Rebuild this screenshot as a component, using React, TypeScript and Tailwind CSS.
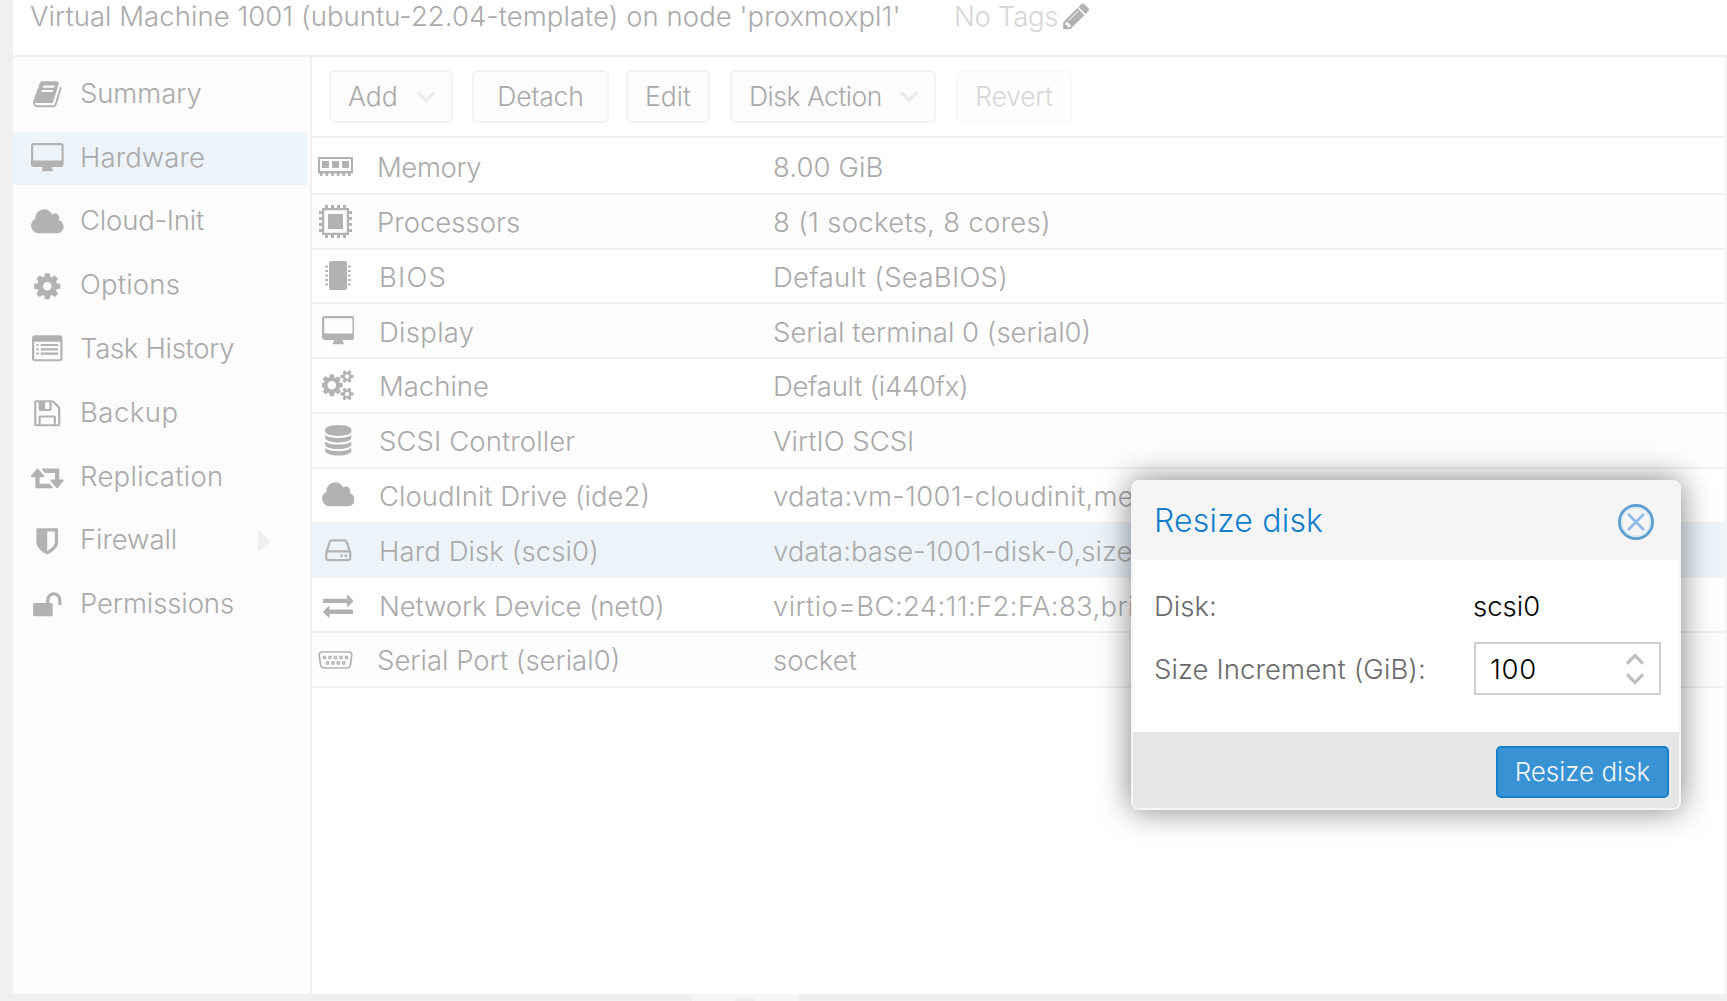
import type { ReactNode } from "react";

type IconProps = { className?: string };

function Glyph({ d, width = 1792, x = 0, className = "" }: { d: string; width?: number; x?: number; className?: string }) {
  return (
    <svg
      viewBox={`${x} 0 ${width} 1792`}
      className={`h-[30.5px] shrink-0 ${className}`}
      style={{ width: (width / 1792) * 30.5 }}
      fill="currentColor"
    >
      <path d={d} />
    </svg>
  );
}

const paths = {
  book: "M1703 478q40 57 18 129l-275 906q-19 64-76.5 107.5t-122.5 43.5h-923q-77 0-148.5-53.5t-99.5-131.5q-24-67-2-127 0-4 3-27t4-37q1-8-3-21.5t-3-19.5q2-11 8-21t16.5-23.5 16.5-23.5q23-38 45-91.5t30-91.5q3-10 .5-30t-.5-28q3-11 17-28t17-23q21-36 42-92t25-90q1-9-2.5-32t.5-28q4-13 22-30.5t22-22.5q19-26 42.5-84.5t27.5-96.5q1-8-3-25.5t-2-26.5q2-8 9-18t18-23 17-21q8-12 16.5-30.5t15-35 16-36 19.5-32 26.5-23.5 36-11.5 47.5 5.5l-1 3q38-9 51-9h761q74 0 114 56t18 130l-274 906q-36 119-71.5 153.5t-128.5 34.5h-869q-27 0-38 15-11 16-1 43 24 70 144 70h923q29 0 56-15.5t35-41.5l300-987q7-22 5-57 38 15 59 43zm-1064 2q-4 13 2 22.5t20 9.5h608q13 0 25.5-9.5t16.5-22.5l21-64q4-13-2-22.5t-20-9.5h-608q-13 0-25.5 9.5t-16.5 22.5zm-83 256q-4 13 2 22.5t20 9.5h608q13 0 25.5-9.5t16.5-22.5l21-64q4-13-2-22.5t-20-9.5h-608q-13 0-25.5 9.5t-16.5 22.5z",
  desktop:
    "M1792 992v-832q0-13-9.5-22.5t-22.5-9.5h-1600q-13 0-22.5 9.5t-9.5 22.5v832q0 13 9.5 22.5t22.5 9.5h1600q13 0 22.5-9.5t9.5-22.5zm128-832v1088q0 66-47 113t-113 47h-544q0 37 16 77.5t32 71 16 43.5q0 26-19 45t-45 19h-512q-26 0-45-19t-19-45q0-14 16-44t32-70 16-78h-544q-66 0-113-47t-47-113v-1088q0-66 47-113t113-47h1600q66 0 113 47t47 113z",
  cloud:
    "M1984 1152q0 159-112.5 271.5t-271.5 112.5h-1088q-185 0-316.5-131.5t-131.5-316.5q0-132 71-241.5t187-163.5q-2-28-2-43 0-212 150-362t362-150q158 0 286.5 88t187.5 230q70-62 166-62 106 0 181 75t75 181q0 75-41 138 129 30 213 134.5t84 239.5z",
  cog: "M1152 896q0-106-75-181t-181-75-181 75-75 181 75 181 181 75 181-75 75-181zm512-109v222q0 12-8 23t-20 13l-185 28q-19 54-39 91 35 50 107 138 10 12 10 25t-9 23q-27 37-99 108t-94 71q-12 0-26-9l-138-108q-44 23-91 38-16 136-29 186-7 28-36 28h-222q-14 0-24.5-8.5t-11.5-21.5l-28-184q-49-16-90-37l-141 107q-10 9-25 9-14 0-25-11-126-114-165-168-7-10-7-23 0-12 8-23 15-21 51-66.5t54-70.5q-27-50-41-99l-183-27q-13-2-21-12.5t-8-23.5v-222q0-12 8-23t19-13l186-28q14-46 39-92-40-57-107-138-10-12-10-24 0-10 9-23 26-36 98.5-107.5t94.5-71.5q13 0 26 10l138 107q44-23 91-38 16-136 29-186 7-28 36-28h222q14 0 24.5 8.5t11.5 21.5l28 184q49 16 90 37l142-107q9-9 24-9 13 0 25 10 129 119 165 170 7 8 7 22 0 12-8 23-15 21-51 66.5t-54 70.5q26 50 41 98l183 28q13 2 21 12.5t8 23.5z",
  list: "M160 128h1472q66 0 113 47t47 113v1216q0 66-47 113t-113 47h-1472q-66 0-113-47t-47-113v-1216q0-66 47-113t113-47zM160 512q-32 0-32 32v960q0 32 32 32h1472q32 0 32-32v-960q0-32-32-32zM256 640h128v128h-128zM512 640h1024v128h-1024zM256 896h128v128h-128zM512 896h1024v128h-1024zM256 1152h128v128h-128zM512 1152h1024v128h-1024z",
  floppy:
    "M512 1536h768v-384h-768v384zm896 0h128v-896q0-14-10-38.5t-20-34.5l-281-281q-10-10-34-20t-39-10v416q0 40-28 68t-68 28h-576q-40 0-68-28t-28-68v-416h-128v1280h128v-416q0-40 28-68t68-28h832q40 0 68 28t28 68v416zm-384-928v-320q0-13-9.5-22.5t-22.5-9.5h-192q-13 0-22.5 9.5t-9.5 22.5v320q0 13 9.5 22.5t22.5 9.5h192q13 0 22.5-9.5t9.5-22.5zm640 32v928q0 40-28 68t-68 28h-1344q-40 0-68-28t-28-68v-1344q0-40 28-68t68-28h928q40 0 88 20t76 48l280 280q28 28 48 76t20 88z",
  retweet:
    "M1344 1504q0 13-9.5 22.5t-22.5 9.5h-960q-8 0-13.5-2t-9-7-5.5-8-3-11.5-1-11.5v-600h-192q-26 0-45-19t-19-45q0-24 15-41l320-384q19-22 49-22t49 22l320 384q15 17 15 41 0 26-19 45t-45 19h-192v384h576q16 0 25 11l160 192q7 10 7 21zm640-416q0 24-15 41l-320 384q-20 23-49 23t-49-23l-320-384q-15-17-15-41 0-26 19-45t45-19h192v-384h-576q-16 0-25-12l-160-192q-7-9-7-20 0-13 9.5-22.5t22.5-9.5h960q8 0 13.5 2t9 7 5.5 8 3 11.5 1 11.5v600h192q26 0 45 19t19 45z",
  shield:
    "M1344 960v-640h-448v1137q119-63 213-137 235-184 235-360zm192-768v768q0 86-33.5 170.5t-83 150-118 127.5-126.5 103-121 77.5-89.5 49.5-42.5 20q-12 6-26 6t-26-6q-16-7-42.5-20t-89.5-49.5-121-77.5-126.5-103-118-127.5-83-150-33.5-170.5v-768q0-26 19-45t45-19h1152q26 0 45 19t19 45z",
  unlock:
    "M1728 576v256q0 26-19 45t-45 19h-64q-26 0-45-19t-19-45v-256q0-106-75-181t-181-75-181 75-75 181v192h96q40 0 68 28t28 68v576q0 40-28 68t-68 28h-960q-40 0-68-28t-28-68v-576q0-40 28-68t68-28h672v-192q0-185 131.5-316.5t316.5-131.5 316.5 131.5 131.5 316.5z",
  pencil:
    "M491 1536l91-91-235-235-91 91v107h128v128h107zm523-928q0-22-22-22-10 0-17 7l-542 542q-7 7-7 17 0 22 22 22 10 0 17-7l542-542q7-7 7-17zm-54-192l416 416-832 832h-416v-416zm683 96q0 53-37 90l-166 166-416-416 166-165q36-38 90-38 53 0 91 38l235 234q37 39 37 91z",
  cogs: "M832 896q0-106-75-181t-181-75-181 75-75 181 75 181 181 75 181-75 75-181zm768 512q0-52-38-90t-90-38-90 38-38 90q0 53 37.5 90.5t90.5 37.5 90.5-37.5 37.5-90.5zm0-1024q0-52-38-90t-90-38-90 38-38 90q0 53 37.5 90.5t90.5 37.5 90.5-37.5 37.5-90.5zm-384 421v185q0 10-7 19.5t-16 10.5l-155 24q-11 35-32 76 34 48 90 115 7 11 7 20 0 12-7 19-23 30-82.5 89.5t-78.5 59.5q-11 0-21-7l-115-90q-37 19-77 31-11 108-23 155-7 24-30 24h-186q-11 0-20-7.5t-10-17.5l-23-153q-34-10-75-31l-118 89q-7 7-20 7-11 0-21-8-144-133-144-160 0-9 7-19 10-14 41-53t47-61q-23-44-35-82l-152-24q-10-1-17-9.5t-7-19.5v-185q0-10 7-19.5t16-10.5l155-24q11-35 32-76-34-48-90-115-7-11-7-20 0-12 7-20 22-30 82-89t79-59q11 0 21 7l115 90q34-18 77-32 11-108 23-154 7-24 30-24h186q11 0 20 7.5t10 17.5l23 153q34 10 75 31l118-89q8-7 20-7 11 0 21 8 144 133 144 160 0 8-7 19-12 16-42 54t-45 60q23 48 34 82l152 23q10 2 17 10.5t7 19.5zm640 533v140q0 16-149 31-12 27-30 52 51 113 51 138 0 4-4 7-122 71-124 71-8 0-46-47t-52-68q-20 2-30 2t-30-2q-14 21-52 68t-46 47q-2 0-124-71-4-3-4-7 0-25 51-138-18-25-30-52-149-15-149-31v-140q0-16 149-31 13-29 30-52-51-113-51-138 0-4 4-7 4-2 35-20t59-34 30-16q8 0 46 46.5t52 67.5q20-2 30-2t30 2q51-71 92-112l6-2q4 0 124 70 4 3 4 7 0 25-51 138 17 23 30 52 149 15 149 31zm0-1024v140q0 16-149 31-12 27-30 52 51 113 51 138 0 4-4 7-122 71-124 71-8 0-46-47t-52-68q-20 2-30 2t-30-2q-14 21-52 68t-46 47q-2 0-124-71-4-3-4-7 0-25 51-138-18-25-30-52-149-15-149-31v-140q0-16 149-31 13-29 30-52-51-113-51-138 0-4 4-7 4-2 35-20t59-34 30-16q8 0 46 46.5t52 67.5q20-2 30-2t30 2q51-71 92-112l6-2q4 0 124 70 4 3 4 7 0 25-51 138 17 23 30 52 149 15 149 31z",
  database:
    "M896 768q237 0 443-43t325-127v170q0 69-103 128t-280 93.5-385 34.5-385-34.5-280-93.5-103-128v-170q119 84 325 127t443 43zm0 768q237 0 443-43t325-127v170q0 69-103 128t-280 93.5-385 34.5-385-34.5-280-93.5-103-128v-170q119 84 325 127t443 43zm0-384q237 0 443-43t325-127v170q0 69-103 128t-280 93.5-385 34.5-385-34.5-280-93.5-103-128v-170q119 84 325 127t443 43zm0-1152q208 0 385 34.5t280 93.5 103 128v128q0 69-103 128t-280 93.5-385 34.5-385-34.5-280-93.5-103-128v-128q0-69 103-128t280-93.5 385-34.5z",
  hdd: "M1168 1216q0 33-23.5 56.5t-56.5 23.5-56.5-23.5-23.5-56.5 23.5-56.5 56.5-23.5 56.5 23.5 23.5 56.5zm256 0q0 33-23.5 56.5t-56.5 23.5-56.5-23.5-23.5-56.5 23.5-56.5 56.5-23.5 56.5 23.5 23.5 56.5zm112 160v-320q0-13-9.5-22.5t-22.5-9.5h-1216q-13 0-22.5 9.5t-9.5 22.5v320q0 13 9.5 22.5t22.5 9.5h1216q13 0 22.5-9.5t9.5-22.5zm-1230-480h1180l-157-482q-4-13-16-21.5t-26-8.5h-782q-14 0-26 8.5t-16 21.5zm1358 160v320q0 66-47 113t-113 47h-1216q-66 0-113-47t-47-113v-320q0-25 16-75l197-606q17-53 63-86t101-33h782q55 0 101 33t63 86l197 606q16 50 16 75z",
  exchange:
    "M1792 1184v192q0 13-9.5 22.5t-22.5 9.5h-1376v192q0 13-9.5 22.5t-22.5 9.5q-12 0-24-10l-319-320q-9-9-9-22 0-14 9-23l320-320q9-9 23-9 13 0 22.5 9.5t9.5 22.5v192h1376q13 0 22.5 9.5t9.5 22.5zm0-544q0 14-9 23l-320 320q-9 9-23 9-13 0-22.5-9.5t-9.5-22.5v-192h-1376q-13 0-22.5-9.5t-9.5-22.5v-192q0-13 9.5-22.5t22.5-9.5h1376v-192q0-14 9-23t23-9q12 0 24 10l319 319q9 9 9 23z",
};

function ListIcon() {
  return (
    <svg viewBox="0 0 1792 1792" className="mb-[3px] h-[30.5px] w-[30.5px] shrink-0" fill="currentColor">
      <path d={paths.list} fillRule="evenodd" />
    </svg>
  );
}

function MemoryIcon({ className = "" }: IconProps) {
  return (
    <svg viewBox="0 0 35 19" className={`h-[19px] w-[35px] shrink-0 ${className}`} fill="currentColor">
      <path d="M0 0h35v16.500h-35zM2 2v12h31v-12z" fillRule="evenodd" />
      <path d="M4 4h7v7h-7zM14 4h7v7h-7zM24 4h7v7h-7z" />
      <path d="M2 16h2.600v3h-2.600zM7.600 16h2.600v3h-2.600zM13.200 16h2.600v3h-2.600zM18.800 16h2.600v3h-2.600zM24.400 16h2.600v3h-2.600zM30 16h2.600v3h-2.600z" />
    </svg>
  );
}

function CpuIcon({ className = "" }: IconProps) {
  const pins = [6, 12, 18, 24];
  return (
    <svg viewBox="0 0 33 33" className={`h-[33px] w-[33px] shrink-0 ${className}`} fill="currentColor">
      <path d="M3 3h27v27h-27zM5.200 5.200v22.600h22.600v-22.600z" fillRule="evenodd" />
      <path d="M9 9h15v15h-15z" />
      {pins.map((p) => (
        <path key={p} d={`M${p} 0h3v4h-3zM${p} 29h3v4h-3zM0 ${p}h4v3h-4zM29 ${p}h4v3h-4z`} />
      ))}
    </svg>
  );
}

function ChipIcon({ className = "" }: IconProps) {
  const rows = [4.5, 9, 13.500, 18, 22.500];
  return (
    <svg viewBox="0 0 26 29" className={`h-[29px] w-[26px] shrink-0 ${className}`} fill="currentColor">
      <rect x="4" y="0" width="18" height="29" rx="2" />
      {rows.map((y) => (
        <path key={y} d={`M1 ${y}h2v2h-2a1 1 0 0 1 0-2zM23 ${y}h2a1 1 0 0 1 0 2h-2z`} />
      ))}
    </svg>
  );
}

function SerialIcon({ className = "" }: IconProps) {
  return (
    <svg viewBox="0 0 35 18" className={`h-[18px] w-[35px] shrink-0 ${className}`} fill="none" stroke="currentColor">
      <path
        d="M4.500 1h26q3.500 0 3.300 3.300l-1.300 9q-.700 3.700-4 3.700h-22q-3.300 0-4-3.700l-1.300-9q-.200-3.300 3.300-3.300z"
        strokeWidth="1.700"
      />
      {[6.500, 12, 17.500, 23, 28.500].map((x) => (
        <circle key={x} cx={x} cy="6.500" r="1.200" strokeWidth="1.400" />
      ))}
      {[9.500, 15, 20.300, 25.700].map((x) => (
        <circle key={x} cx={x} cy="12" r="1.200" strokeWidth="1.400" />
      ))}
    </svg>
  );
}

function Chevron({ up = false, className = "" }: { up?: boolean; className?: string }) {
  return (
    <svg viewBox="0 0 18 12" className={`h-3 w-[18px] shrink-0 ${className}`} fill="none" stroke="currentColor" strokeWidth="3.200">
      <path d={up ? "M1 10.500l8-8 8 8" : "M1 1.500l8 8 8-8"} />
    </svg>
  );
}

const nav: { label: string; icon: ReactNode; tracking: string; active?: boolean; sub?: boolean }[] = [
  { label: "Summary", icon: <Glyph d={paths.book} />, tracking: "tracking-[-0.1px]" },
  { label: "Hardware", icon: <Glyph d={paths.desktop} width={1920} />, tracking: "tracking-[0.1px]", active: true },
  { label: "Cloud-Init", icon: <Glyph d={paths.cloud} width={1920} x={64} />, tracking: "tracking-[-0.2px]" },
  { label: "Options", icon: <Glyph d={paths.cog} />, tracking: "tracking-[0.2px]" },
  { label: "Task History", icon: <ListIcon />, tracking: "tracking-[-0.3px]" },
  { label: "Backup", icon: <Glyph d={paths.floppy} />, tracking: "tracking-[0.5px]" },
  { label: "Replication", icon: <Glyph d={paths.retweet} width={1920} x={64} />, tracking: "tracking-[0.3px]" },
  { label: "Firewall", icon: <Glyph d={paths.shield} />, tracking: "tracking-[-0.1px]", sub: true },
  { label: "Permissions", icon: <Glyph d={paths.unlock} />, tracking: "tracking-[-0.1px]" },
];

type Device = {
  label: string;
  value: string;
  icon: ReactNode;
  wide?: boolean;
  selected?: boolean;
  labelTracking?: string;
  valueTracking?: string;
};

const hardware: Device[] = [
  { label: "Memory", value: "8.00 GiB", icon: <MemoryIcon />, wide: true, labelTracking: "tracking-[-0.4px]", valueTracking: "tracking-[0.1px]" },
  { label: "Processors", value: "8 (1 sockets, 8 cores)", icon: <CpuIcon />, wide: true, valueTracking: "tracking-[0.3px]" },
  { label: "BIOS", value: "Default (SeaBIOS)", icon: <ChipIcon />, labelTracking: "tracking-[1.2px]", valueTracking: "tracking-[0.3px]" },
  {
    label: "Display",
    value: "Serial terminal 0 (serial0)",
    icon: <Glyph d={paths.desktop} width={1920} />,
    labelTracking: "tracking-[0.3px]",
  },
  { label: "Machine", value: "Default (i440fx)", icon: <Glyph d={paths.cogs} width={1920} />, valueTracking: "tracking-[-0.3px]" },
  { label: "SCSI Controller", value: "VirtIO SCSI", icon: <Glyph d={paths.database} />, labelTracking: "tracking-[0.1px]" },
  {
    label: "CloudInit Drive (ide2)",
    value: "vdata:vm-1001-cloudinit,me",
    icon: <Glyph d={paths.cloud} width={1920} x={64} />,
    valueTracking: "tracking-[0.3px]",
  },
  {
    label: "Hard Disk (scsi0)",
    value: "vdata:base-1001-disk-0,size",
    icon: <Glyph d={paths.hdd} />,
    selected: true,
    labelTracking: "tracking-[0.1px]",
    valueTracking: "tracking-[0.05px]",
  },
  {
    label: "Network Device (net0)",
    value: "virtio=BC:24:11:F2:FA:83,bri",
    icon: <Glyph d={paths.exchange} />,
    labelTracking: "tracking-[-0.15px]",
    valueTracking: "tracking-[0.35px]",
  },
  { label: "Serial Port (serial0)", value: "socket", icon: <SerialIcon />, wide: true },
];

function ToolButton({ className, children }: { className: string; children: ReactNode }) {
  return (
    <button
      className={`flex h-[53px] shrink-0 items-center rounded-md border-2 text-[26.500px] font-light whitespace-nowrap ${className}`}
    >
      {children}
    </button>
  );
}

export default function App() {
  return (
    <div className="relative flex h-[1001px] w-[1727px] flex-col overflow-hidden bg-[#f0f0f0] pl-[13px] font-['Inter','Liberation_Sans',sans-serif] text-[27.500px] leading-none font-light text-[#aaaaaa]">
      <header className="flex h-[57px] shrink-0 items-start border-b-2 border-[#f0f0f0] bg-white pt-[2px] pl-[17px] leading-[28px] whitespace-nowrap">
        <span className="w-[924px] tracking-[0.05px]">Virtual Machine 1001 (ubuntu-22.04-template) on node 'proxmoxpl1'</span>
        <span className="w-[107px] tracking-[-0.3px] text-[#d6d6d6]">No Tags</span>
        <Glyph d={paths.pencil} className="mt-[-1px] text-[#b2b2b2]" />
      </header>

      <div className="flex h-[937px] shrink-0">
        <nav className="flex w-[299px] shrink-0 flex-col border-r-2 border-[#f0f0f0] bg-[#fcfcfc] pt-[5.700px]">
          {nav.map((n) => (
            <div key={n.label} className="flex h-[63.800px] shrink-0 items-center">
              <div className={`flex h-[53px] w-[294.500px] items-center pl-[17px] ${n.active ? "bg-[#ecf4fa]" : ""}`}>
                <span className="flex w-[35px] justify-center text-[#b2b2b2]">{n.icon}</span>
                <span className={`mb-[2px] ml-[15px] w-[178px] whitespace-nowrap ${n.tracking}`}>{n.label}</span>
                {n.sub && (
                  <svg viewBox="0 0 12 22" className="h-[22px] w-3 text-[#efefef]" fill="currentColor">
                    <path d="M0 1.500q0-2 1.500-.700l10 9.400q.800.800 0 1.600l-10 9.400q-1.500 1.300-1.500-.700z" />
                  </svg>
                )}
              </div>
            </div>
          ))}
        </nav>

        <main className="flex min-w-0 flex-1 flex-col border-r-2 border-[#f3f3f3] bg-white">
          <div className="flex h-[81px] shrink-0 items-start border-b-2 border-[#f0f0f0] pt-[13px] pl-[17px]">
            <ToolButton className="w-[124px] justify-between border-[#f2f2f2] bg-[#fcfcfc] pr-4 pl-[17px]">
              Add <Chevron className="text-[#ebebeb]" />
            </ToolButton>
            <ToolButton className="ml-[19px] w-[137px] justify-center border-[#f2f2f2] bg-[#fcfcfc] tracking-[-0.2px]">Detach</ToolButton>
            <ToolButton className="ml-[17px] w-[84px] justify-center border-[#f2f2f2] bg-[#fcfcfc]">Edit</ToolButton>
            <ToolButton className="ml-[20px] w-[206px] justify-between border-[#f2f2f2] bg-[#fcfcfc] pr-4 pl-[17px] tracking-[-0.5px]">
              Disk Action <Chevron className="text-[#ebebeb]" />
            </ToolButton>
            <ToolButton className="ml-[20px] w-[116px] justify-center border-[#f9f9f9] bg-[#fefefe] tracking-[-0.2px] text-[#d6d6d6]">
              Revert
            </ToolButton>
          </div>

          <div className="flex flex-col pt-[2px]">
            {hardware.map((h, i) => (
              <div
                key={h.label}
                className={`flex shrink-0 items-center border-b-2 whitespace-nowrap ${
                  h.selected
                    ? "-mt-[2px] h-[56.800px] border-[#ecf4fa] bg-[#ecf4fa] pt-[2px]"
                    : i % 2
                      ? "h-[54.800px] border-[#f0f0f0] bg-[#fdfdfd]"
                      : "h-[54.800px] border-[#f0f0f0] bg-white"
                }`}
              >
                <span className={`flex w-[37px] shrink-0 justify-center text-[#b2b2b2] ${h.wide ? "ml-[5px]" : "ml-[7.500px]"}`}>
                  {h.icon}
                </span>
                <span
                  className={`mt-[3px] shrink-0 ${h.wide ? "ml-[23px] w-[396px]" : "ml-[22.500px] w-[394px]"} ${h.labelTracking ?? ""}`}
                >
                  {h.label}
                </span>
                <span className={`mt-[3px] ${h.valueTracking ?? ""}`}>{h.value}</span>
              </div>
            ))}
          </div>
        </main>
      </div>

      <div className="flex h-[7px] shrink-0 justify-start pl-[679px]">
        <div className="flex w-[106px] justify-center bg-[#f6f6f6] pt-[4px]">
          <div className="h-[3px] w-[20px] bg-[#efefef]" />
        </div>
      </div>

      <section className="absolute top-[480px] left-[1131px] flex h-[330px] w-[550px] flex-col overflow-hidden rounded-lg border-2 border-[#f5f5f5] bg-white text-[#6a6a6a] shadow-[0_0_32px_rgba(0,0,0,0.5)]">
        <div className="flex h-[78px] shrink-0 items-center justify-between bg-[#f5f5f5] pr-[25px] pl-[21px]">
          <h2 className="text-[32px] tracking-[0.2px] text-[#157fcc]">Resize disk</h2>
          <svg viewBox="0 0 36 36" className="mt-[1px] h-9 w-9" fill="none">
            <circle cx="18" cy="18" r="16.500" stroke="#5b9fd0" strokeWidth="3" />
            <circle cx="18" cy="18" r="14.500" stroke="#d3e5f3" strokeWidth="1.500" />
            <path d="M10 10l16 16M26 10l-16 16" stroke="#8fbbe6" strokeWidth="2.800" />
          </svg>
        </div>
        <div className="flex h-[172px] shrink-0 flex-col pt-[20px] pl-[21px]">
          <div className="flex h-[53px] items-center">
            <span className="w-[319px]">Disk:</span>
            <span className="text-black">scsi0</span>
          </div>
          <div className="mt-[9px] flex h-[53px] items-center">
            <span className="w-[320px] pt-[3px] tracking-[0.1px]">Size Increment (GiB):</span>
            <div className="flex h-[53px] w-[187px] items-center justify-between border-2 border-[#cfcfcf] pr-[15px] pl-[14px] text-black">
              <span className="pt-[3px] tracking-[0.7px]">100</span>
              <span className="flex flex-col gap-2 text-[#bfbfbf]">
                <Chevron up />
                <Chevron />
              </span>
            </div>
          </div>
        </div>
        <div className="flex flex-1 items-start justify-end bg-[#e6e6e6] pt-[14px] pr-[10px]">
          <button className="flex h-[52px] w-[173px] items-center justify-center rounded-[5px] border-2 border-[#157fcc] bg-[#3892d4] pb-px text-[26px] font-light whitespace-nowrap text-[#f0f6fb]">
            Resize disk
          </button>
        </div>
      </section>
    </div>
  );
}
